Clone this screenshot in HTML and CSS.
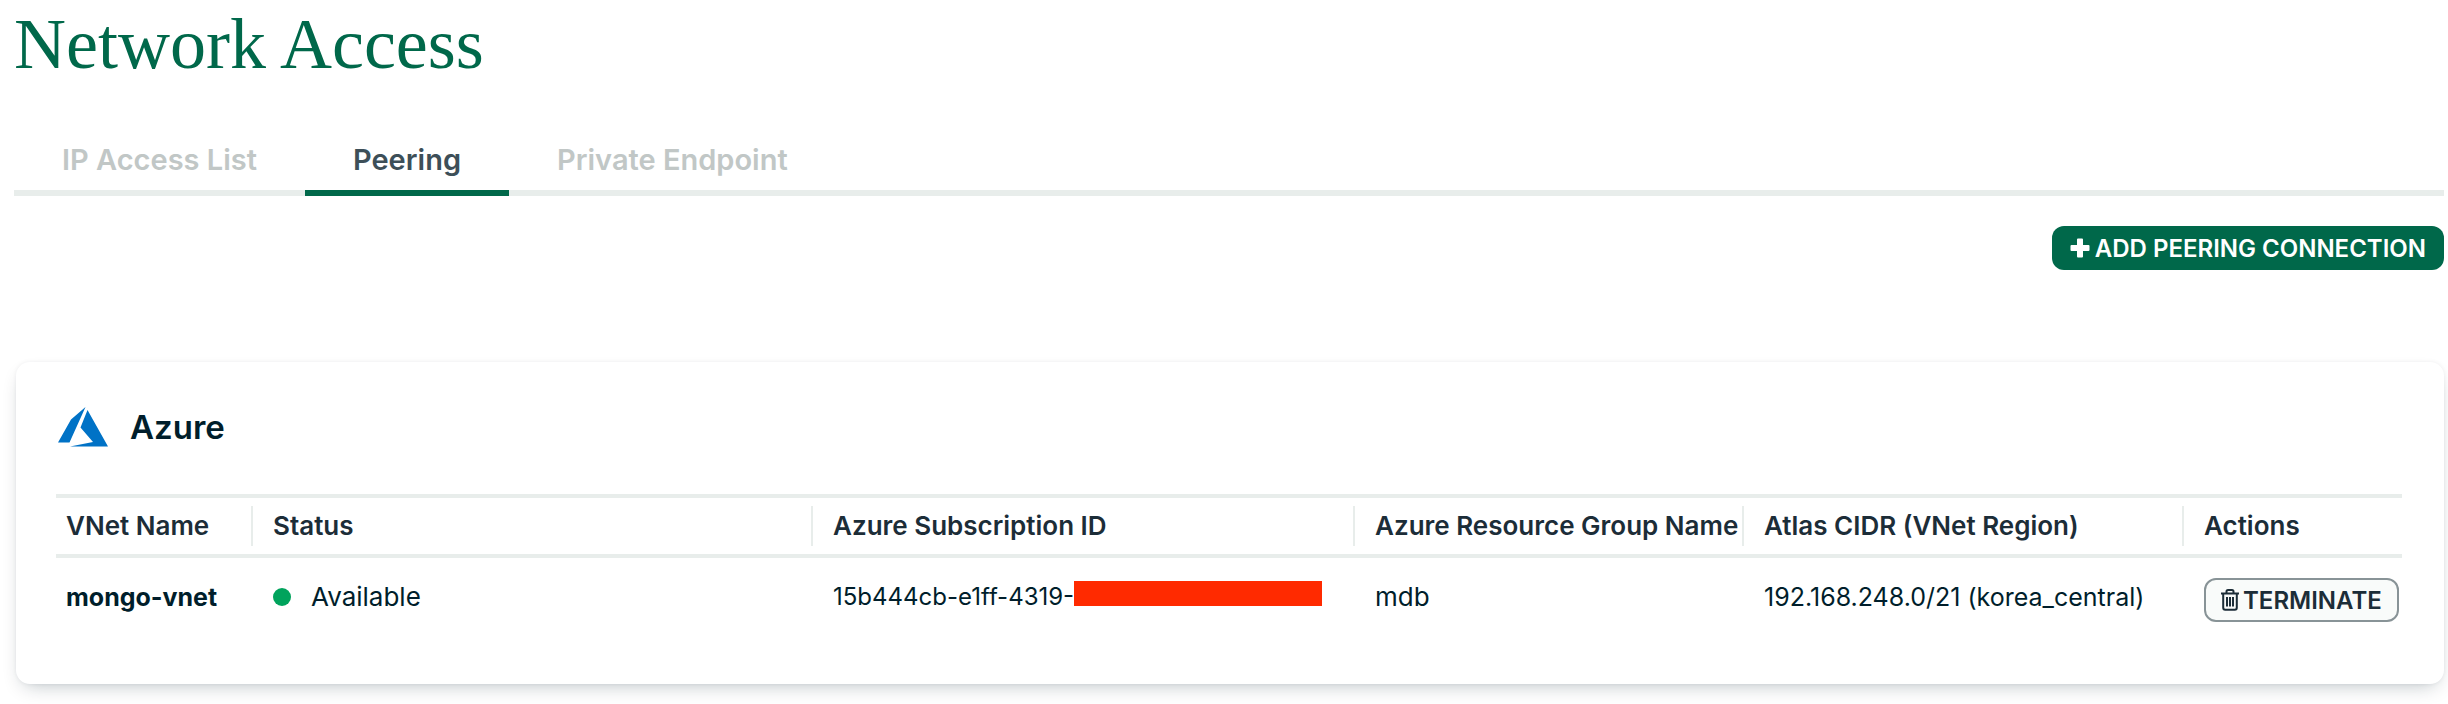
FILE: index.html
```html
<!DOCTYPE html>
<html lang="en">
<head>
<meta charset="utf-8">
<title>Network Access</title>
<link rel="stylesheet" href="styles.css">
</head>
<body>
<main class="page">
  <h1 class="page-title">Network Access</h1>
  <nav class="tabs" aria-label="Network access sections">
    <a class="tab" href="#ip">IP Access List</a>
    <a class="tab tab-active" href="#peering" aria-current="page">Peering</a>
    <a class="tab" href="#endpoint">Private Endpoint</a>
  </nav>
  <div class="toolbar">
    <button class="button button-primary" type="button">
      <svg class="plus" viewBox="0 0 20 20" aria-hidden="true"><path d="M8 .5h4q1 0 1 1V7h5.500q1 0 1 1v4q0 1-1 1H13v5.500q0 1-1 1H8q-1 0-1-1V13H1.500q-1 0-1-1V8q0-1 1-1H7V1.500q0-1 1-1z"/></svg>
      <span>ADD PEERING CONNECTION</span>
    </button>
  </div>
  <section class="card">
    <header class="card-header">
      <svg class="azure" viewBox="0 0 50 40" aria-hidden="true"><path d="M27.500 0 13 12.500 0 35.500h11.500zM29.500 3 22.500 20.500l12.500 14.500-23 4.500H50z"/></svg>
      <h2 class="card-title">Azure</h2>
    </header>
    <table class="peers">
      <colgroup><col class="col-name"><col><col class="col-sub"><col class="col-group"><col class="col-cidr"><col class="col-actions"></colgroup>
      <thead>
        <tr>
          <th scope="col"><span class="head">VNet Name</span></th>
          <th scope="col"><span class="head">Status</span></th>
          <th scope="col"><span class="head">Azure Subscription ID</span></th>
          <th scope="col"><span class="head">Azure Resource Group Name</span></th>
          <th scope="col"><span class="head">Atlas CIDR (VNet Region)</span></th>
          <th scope="col"><span class="head">Actions</span></th>
        </tr>
      </thead>
      <tbody>
        <tr>
          <td class="name">mongo-vnet</td>
          <td><span class="status"><span class="dot"></span>Available</span></td>
          <td><span class="subscription">15b444cb-e1ff-4319-<span class="redacted"></span></span></td>
          <td>mdb</td>
          <td class="cidr">192.168.248.0/21 (korea_central)</td>
          <td>
            <button class="button button-outline" type="button">
              <svg class="trash" viewBox="0 0 18 22" aria-hidden="true"><path d="M0 4.500h18M5.500 4V2.500Q5.500 1 7 1h4q1.500 0 1.500 1.500V4M2.200 5v13.500q0 2.300 2 2.300h9.600q2 0 2-2.300V5M6 8v9.500M9 8v9.500M12 8v9.500"/></svg>
              <span>TERMINATE</span>
            </button>
          </td>
        </tr>
      </tbody>
    </table>
  </section>
</main>
</body>
</html>
```
FILE: styles.css
```css
* { box-sizing: border-box; }
body {
  margin: 0;
  background: #fff;
  color: #001e2b;
  font-family: Inter, "Liberation Sans", sans-serif;
  font-size: 26px;
}
.page { padding: 0 4px 20px 14px; }
.page-title {
  margin: 0;
  height: 120px;
  padding-top: 4px;
  color: #00684a;
  font-family: "Liberation Serif", serif;
  font-size: 72px;
  font-weight: 400;
  line-height: 80px;
}
.tabs {
  display: flex;
  height: 76px;
  border-bottom: 6px solid #e8edeb;
}
.tab {
  height: 76px;
  padding: 20px 48px 0;
  border-bottom: 6px solid transparent;
  color: #c1c7c6;
  font-size: 29px;
  font-weight: 600;
  line-height: 40px;
  text-align: center;
  text-decoration: none;
  white-space: nowrap;
}
.tab-active { border-color: #00684a; color: #3d4f58; }
.toolbar {
  display: flex;
  justify-content: flex-end;
  padding: 30px 0 92px;
}
.button {
  display: flex;
  align-items: center;
  height: 44px;
  border-radius: 12px;
  font-family: inherit;
  font-size: 24px;
  font-weight: 600;
  white-space: nowrap;
}
.button-primary {
  gap: 5px;
  padding: 0 18px;
  border: 0;
  background: #00684a;
  color: #fff;
}
.plus { width: 20px; height: 20px; fill: currentColor; }
.card {
  margin: 0 0 0 2px;
  padding: 40px 42px 62px 40px;
  border-radius: 14px;
  background: #fff;
  box-shadow: 0 8px 20px -8px rgba(0, 30, 43, .3), 0 0 4px rgba(0, 30, 43, .06);
}
.card-header {
  display: flex;
  align-items: center;
  gap: 22px;
  height: 92px;
  padding: 0 2px 42px;
}
.azure { width: 50px; height: 40px; fill: #0072c6; }
.card-title { margin: 0; font-size: 33px; font-weight: 600; line-height: 40px; }
.peers {
  width: 100%;
  border-collapse: collapse;
  table-layout: fixed;
}
.col-name { width: 195px; }
.col-sub { width: 542px; }
.col-group { width: 389px; }
.col-cidr { width: 440px; }
.col-actions { width: 220px; }
th {
  padding: 8px 0;
  border-top: 4px solid #e8edeb;
  border-bottom: 4px solid #e8edeb;
  color: #1c2d38;
  font-weight: 600;
  text-align: left;
  white-space: nowrap;
}
.head {
  display: block;
  padding-left: 20px;
  border-left: 2px solid #e8edeb;
  line-height: 40px;
}
th:first-child .head { padding-left: 10px; border: 0; }
td {
  padding: 20px 0 0 22px;
  line-height: 38px;
  vertical-align: top;
  white-space: nowrap;
}
td:first-child { padding-left: 10px; }
.name { font-size: 25px; font-weight: 700; }
.cidr { font-size: 25px; }
.status { display: flex; align-items: center; gap: 20px; }
.dot { width: 18px; height: 18px; border-radius: 50%; background: #00a35c; }
.subscription { display: flex; font-size: 24px; }
.redacted { width: 248px; height: 25px; margin-top: 3px; background: #ff2a00; }
.button-outline {
  gap: 4px;
  padding: 0 15px;
  border: 2px solid #889397;
  background: #f9fbfa;
  color: #1c2d38;
}
.trash { width: 18px; height: 22px; fill: none; stroke: currentColor; stroke-width: 2; }
```
